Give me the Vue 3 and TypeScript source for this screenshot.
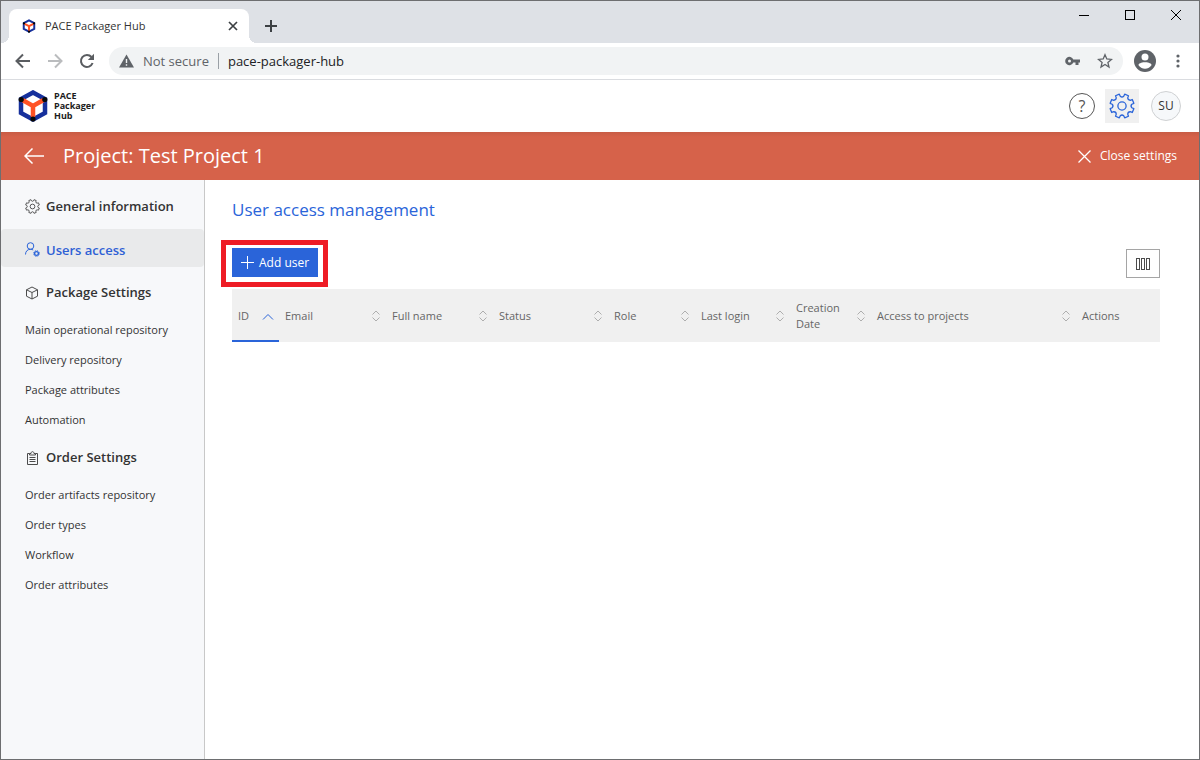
<script setup lang="ts">
import { ref } from 'vue'

interface Column {
  key: string
  label: string
  sort: 'asc' | 'none' | null
}

interface NavGroup {
  title: string
  icon: 'box' | 'clipboard'
  items: string[]
}

const address = ref('pace-packager-hub')

const columns: Column[] = [
  { key: 'id', label: 'ID', sort: 'asc' },
  { key: 'email', label: 'Email', sort: 'none' },
  { key: 'name', label: 'Full name', sort: 'none' },
  { key: 'status', label: 'Status', sort: 'none' },
  { key: 'role', label: 'Role', sort: 'none' },
  { key: 'login', label: 'Last login', sort: 'none' },
  { key: 'created', label: 'Creation Date', sort: 'none' },
  { key: 'projects', label: 'Access to projects', sort: 'none' },
  { key: 'actions', label: 'Actions', sort: null },
]

const groups: NavGroup[] = [
  {
    title: 'Package Settings',
    icon: 'box',
    items: ['Main operational repository', 'Delivery repository', 'Package attributes', 'Automation'],
  },
  {
    title: 'Order Settings',
    icon: 'clipboard',
    items: ['Order artifacts repository', 'Order types', 'Workflow', 'Order attributes'],
  },
]

// Outline of an eight-toothed cog centred on (12, 12), with rounded valleys between the teeth
function cog(outer: number, inner: number, valley: number): string {
  const at = (angle: number, r: number) =>
    `${(12 + r * Math.sin(angle)).toFixed(2)} ${(12 - r * Math.cos(angle)).toFixed(2)}`
  let d = ''
  for (let i = 0; i < 8; i++) {
    const a = ((i + 0.5) * Math.PI) / 4
    d += `${i ? 'L' : 'M'}${at(a - 0.22, inner)}L${at(a - 0.17, outer)}L${at(a + 0.17, outer)}L${at(a + 0.22, inner)}`
    d += `Q${at(a + Math.PI / 8, valley)} ${at(a + Math.PI / 4 - 0.22, inner)}`
  }
  return `${d}Z`
}

const cogPath = cog(11.2, 9.2, 7.6)
</script>

<template>
  <div class="window">
    <header class="tabstrip">
      <div class="tab">
        <svg class="favicon" viewBox="0 0 30 32" aria-hidden="true">
          <path d="M15 3L27 9.500V22.500L15 29L3 22.500V9.500Z" fill="none" stroke="#16309c" stroke-width="4.500" />
          <path d="M5 11L15 16.500L25 11M15 16.500V27" fill="none" stroke="#ff5224" stroke-width="4.500" />
          <circle cx="3.500" cy="10" r="2.500" /><circle cx="26.500" cy="10" r="2.500" /><circle cx="15" cy="29" r="2.500" />
        </svg>
        <span class="tab-title">PACE Packager Hub</span>
        <button class="plain tab-close" aria-label="Close tab">
          <svg width="10" height="10" viewBox="0 0 10 10"><path d="M1 1L9 9M9 1L1 9" stroke="#3c4043" stroke-width="1.700" /></svg>
        </button>
      </div>
      <button class="plain new-tab" aria-label="New tab">
        <svg width="12" height="12" viewBox="0 0 12 12"><path d="M6 0V12M0 6H12" stroke="#3c4043" stroke-width="2" /></svg>
      </button>
      <div class="window-buttons">
        <button class="plain" aria-label="Minimize">
          <svg width="12" height="12" viewBox="0 0 12 12"><path d="M1 6.500H11" stroke="#000" /></svg>
        </button>
        <button class="plain" aria-label="Maximize">
          <svg width="12" height="12" viewBox="0 0 12 12"><rect x="1.500" y="1.500" width="9" height="9" fill="none" stroke="#000" /></svg>
        </button>
        <button class="plain" aria-label="Close window">
          <svg width="12" height="12" viewBox="0 0 12 12"><path d="M1 1L11 11M11 1L1 11" stroke="#000" /></svg>
        </button>
      </div>
    </header>

    <div class="toolbar">
      <button class="plain nav-button" aria-label="Back">
        <svg width="16" height="16" viewBox="0 0 16 16"><path d="M15 8H2M8 1.500L1.500 8L8 14.500" fill="none" stroke="#5a5d61" stroke-width="2" /></svg>
      </button>
      <button class="plain nav-button" aria-label="Forward">
        <svg width="16" height="16" viewBox="0 0 16 16"><path d="M1 8H14M8 1.500L14.500 8L8 14.500" fill="none" stroke="#babcbe" stroke-width="2" /></svg>
      </button>
      <button class="plain nav-button" aria-label="Reload">
        <svg width="16" height="16" viewBox="0 0 16 16">
          <path d="M13.600 10A6 6 0 1 1 12.500 4" fill="none" stroke="#5a5d61" stroke-width="2" />
          <path d="M15 0.800V7H8.800Z" fill="#5a5d61" />
        </svg>
      </button>
      <div class="omnibox">
        <svg class="warn" width="15" height="14" viewBox="0 0 15 14">
          <path d="M7.500 0.500L15 13.500H0Z" fill="#5f6368" /><path d="M7.500 5V9M7.500 10.200V11.800" stroke="#f1f3f4" stroke-width="1.400" />
        </svg>
        <span class="insecure">Not secure</span>
        <input v-model="address" class="address" aria-label="Address" type="text" />
        <button class="plain" aria-label="Saved passwords">
          <svg width="16" height="10" viewBox="0 0 16 10">
            <path fill="#5f6368" fill-rule="evenodd" d="M8.300 3.500H15V6.500H13.500V9H10.500V6.500H8.300A4.200 4.200 0 1 1 8.300 3.500ZM4.500 3.500A1.500 1.500 0 1 0 4.500 6.500A1.500 1.500 0 1 0 4.500 3.500Z" />
          </svg>
        </button>
        <button class="plain star" aria-label="Bookmark">
          <svg width="16" height="16" viewBox="0 0 16 16">
            <path d="M8 1.700L9.800 6L14.500 6.400L10.900 9.400L12 14L8 11.500L4 14L5.100 9.400L1.500 6.400L6.200 6Z" fill="none" stroke="#5f6368" stroke-width="1.300" />
          </svg>
        </button>
      </div>
      <button class="plain profile" aria-label="Profile">
        <svg width="22" height="22" viewBox="0 0 22 22">
          <circle cx="11" cy="11" r="11" fill="#5f6368" /><circle cx="11" cy="7" r="3.500" fill="#fff" />
          <path d="M4.400 15C5 12.800 9 12.300 11 12.300S17 12.800 17.600 15C16.200 17.400 13.800 18.800 11 18.800S5.800 17.400 4.400 15Z" fill="#fff" />
        </svg>
      </button>
      <button class="plain menu" aria-label="Menu">
        <svg width="4" height="14" viewBox="0 0 4 14" fill="#5f6368"><circle cx="2" cy="2" r="1.600" /><circle cx="2" cy="7" r="1.600" /><circle cx="2" cy="12" r="1.600" /></svg>
      </button>
    </div>

    <header class="app-header">
      <a class="brand" href="#">
        <svg width="30" height="32" viewBox="0 0 30 32" aria-hidden="true">
          <path d="M15 2.500L27 9V23L15 29.500L3 23V9Z" fill="none" stroke="#16309c" stroke-width="4.500" />
          <path d="M4.500 10L15 16L25.500 10M15 16V27" fill="none" stroke="#ff5224" stroke-width="4.500" />
          <g fill="#080808"><circle cx="3.200" cy="9.500" r="2.600" /><circle cx="26.800" cy="9.500" r="2.600" /><circle cx="15" cy="29" r="2.600" /></g>
        </svg>
        <span class="brand-name">PACE<br />Packager<br />Hub</span>
      </a>
      <div class="header-actions">
        <button class="plain help" aria-label="Help">?</button>
        <button class="plain gear" aria-label="Settings">
          <svg width="26" height="26" viewBox="0 0 24 24" fill="none" stroke="#2a64d9" stroke-width="1.200" stroke-linejoin="round">
            <path :d="cogPath" /><circle cx="12" cy="12" r="3.800" />
          </svg>
        </button>
        <button class="plain avatar">SU</button>
      </div>
    </header>

    <div class="project-bar">
      <button class="plain back" aria-label="Back to projects">
        <svg width="20" height="16" viewBox="0 0 20 16"><path d="M20 8H1M8.500 0.500L1 8L8.500 15.500" fill="none" stroke="#fff" stroke-width="1.500" /></svg>
      </button>
      <h1>Project: Test Project 1</h1>
      <button class="plain close-settings">
        <svg width="13" height="13" viewBox="0 0 13 13"><path d="M0.500 0.500L12.500 12.500M12.500 0.500L0.500 12.500" stroke="#fff" stroke-width="1.300" /></svg>
        Close settings
      </button>
    </div>

    <div class="body">
      <nav class="sidebar" aria-label="Settings">
        <a class="section" href="#">
          <svg width="15" height="15" viewBox="0 0 24 24" fill="none" stroke="#4c4c4c" stroke-width="1.500" stroke-linejoin="round">
            <path :d="cogPath" /><circle cx="12" cy="12" r="3.800" />
          </svg>
          General information
        </a>
        <a class="section active" href="#" aria-current="page">
          <svg width="15" height="15" viewBox="0 0 15 15" fill="none" stroke="#2a64d9">
            <circle cx="5.500" cy="4" r="3.300" /><path d="M0.500 12.500C0.500 9.300 2.500 7.300 5.500 7.300C6.500 7.300 7.500 7.500 8.200 8" />
            <circle cx="11.500" cy="11.500" r="1.900" stroke-width="1.400" />
            <circle cx="11.500" cy="11.500" r="2.900" stroke-dasharray="1.100 1.180" />
          </svg>
          Users access
        </a>
        <div v-for="group in groups" :key="group.title" class="group">
          <h2 class="section">
            <svg v-if="group.icon === 'box'" width="15" height="15" viewBox="0 0 15 15" fill="none" stroke="#4c4c4c" stroke-linejoin="round">
              <path d="M7 2L12.500 4.800V11.200L7 14L1.500 11.200V4.800ZM1.500 4.800L7 7.500L12.500 4.800M7 7.500V14" />
            </svg>
            <svg v-else width="15" height="15" viewBox="0 0 15 15" fill="none" stroke="#4c4c4c">
              <path d="M4.500 3.500H2.500V14.500H12.500V3.500H10.500M4.500 5V3.500H6C6 1 9 1 9 3.500H10.500V5ZM4.500 7.500H10.500M4.500 9.500H10.500M4.500 11.500H10.500" />
            </svg>
            {{ group.title }}
          </h2>
          <ul>
            <li v-for="item in group.items" :key="item"><a href="#">{{ item }}</a></li>
          </ul>
        </div>
      </nav>

      <main class="content">
        <h2 class="title">User access management</h2>
        <div class="actions">
          <div class="highlight">
            <button class="plain add-user">
              <svg width="13" height="13" viewBox="0 0 13 13"><path d="M6.500 0V13M0 6.500H13" stroke="#fff" /></svg>
              Add user
            </button>
          </div>
          <button class="plain columns-button" aria-label="Choose columns">
            <svg width="14" height="12" viewBox="0 0 14 12" fill="none" stroke="#4c4c4c">
              <rect x="0.500" y="0.500" width="3" height="11" /><rect x="5.500" y="0.500" width="3" height="11" /><rect x="10.500" y="0.500" width="3" height="11" />
            </svg>
          </button>
        </div>
        <table>
          <thead>
            <tr>
              <th v-for="col in columns" :key="col.key" scope="col" :class="[`col-${col.key}`, { sorted: col.sort === 'asc' }]">
                <div class="cell">
                  <span>{{ col.label }}</span>
                  <svg v-if="col.sort === 'asc'" width="12" height="12" viewBox="0 0 12 12" fill="none" stroke="#2a64d9">
                    <path d="M1 9.500L6 4.500L11 9.500" />
                  </svg>
                  <svg v-else-if="col.sort" width="10" height="12" viewBox="0 0 10 12" fill="none" stroke="#aeaeae">
                    <path d="M1.500 4.500L5 1L8.500 4.500M1.500 7.500L5 11L8.500 7.500" />
                  </svg>
                </div>
              </th>
            </tr>
          </thead>
        </table>
      </main>
    </div>
  </div>
</template>

<style>
body {
  margin: 0;
}
</style>

<style scoped>
.window,
.window * {
  box-sizing: border-box;
}
.window {
  min-height: 100vh;
  display: flex;
  flex-direction: column;
  border: 1px solid #6d6e70;
  background: #fff;
  color: #333;
  font-family: "Open Sans", "Noto Sans", sans-serif;
  font-size: 12px;
  line-height: 16px;
}
svg {
  display: block;
  flex: none;
}
h1,
h2,
ul {
  margin: 0;
  padding: 0;
  font-weight: 400;
  list-style: none;
}
a {
  color: inherit;
  text-decoration: none;
}
.plain {
  display: flex;
  align-items: center;
  justify-content: center;
  border: 0;
  padding: 0;
  background: none;
  color: inherit;
  font: inherit;
  white-space: nowrap;
}

.tabstrip {
  display: flex;
  height: 42px;
  padding: 8px 8px 0;
  background: #dee1e6;
}
.tab {
  position: relative;
  display: flex;
  align-items: center;
  width: 240px;
  padding: 0 9px 0 13px;
  border-radius: 8px 8px 0 0;
  background: #fff;
}
.tab::before,
.tab::after {
  content: "";
  position: absolute;
  bottom: 0;
  width: 8px;
  height: 8px;
}
.tab::before {
  right: 100%;
  background: radial-gradient(circle at 0 0, transparent 8px, #fff 8px);
}
.tab::after {
  left: 100%;
  background: radial-gradient(circle at 100% 0, transparent 8px, #fff 8px);
}
.favicon {
  width: 14px;
  height: 14px;
  margin-right: 9px;
}
.tab-title {
  flex: 1;
  font-size: 11px;
}
.tab-close {
  width: 14px;
}
.new-tab {
  width: 28px;
  margin-left: 8px;
}
.window-buttons {
  display: flex;
  gap: 34px;
  height: 12px;
  margin-left: auto;
  padding-right: 9px;
}

.toolbar {
  display: flex;
  align-items: center;
  height: 37px;
  padding: 0 19px 0 14px;
  border-bottom: 1px solid #dadce0;
}
.nav-button {
  margin-right: 16px;
}
.omnibox {
  flex: 1;
  display: flex;
  align-items: center;
  height: 28px;
  margin-left: -2px;
  padding: 0 10px;
  border-radius: 14px;
  background: #f1f3f4;
  font-size: 13px;
}
.insecure {
  margin-left: 9px;
  padding-right: 9px;
  border-right: 1px solid #9aa0a6;
  color: #5f6368;
}
.address {
  flex: 1;
  min-width: 0;
  border: 0;
  padding: 0 0 0 9px;
  background: none;
  color: #202124;
  font: inherit;
  outline: 0;
}
.star {
  margin-left: 16px;
}
.profile {
  margin-left: 11px;
}
.menu {
  margin-left: 20px;
}

.app-header {
  display: flex;
  align-items: center;
  justify-content: space-between;
  height: 52px;
  padding: 0 18px 0 17px;
}
.brand {
  display: flex;
  align-items: center;
  gap: 6px;
  color: #1c1c1c;
  font-size: 9px;
  font-weight: 700;
  line-height: 10px;
}
.header-actions {
  display: flex;
  align-items: center;
  gap: 10px;
}
.help {
  width: 26px;
  height: 26px;
  border: 1px solid #555;
  border-radius: 50%;
  color: #555;
  font-size: 16px;
}
.gear {
  width: 34px;
  height: 34px;
  background: #f0f0f0;
}
.avatar {
  width: 30px;
  height: 30px;
  margin-left: 2px;
  border: 1px solid #cfd1d3;
  border-radius: 50%;
  background: #f6f8fa;
}

.project-bar {
  display: flex;
  align-items: center;
  height: 48px;
  padding: 0 22px 0 23px;
  background: linear-gradient(#c85c45, #d6624a 5px);
  color: #fff;
}
h1 {
  margin-left: 19px;
  font-size: 20px;
  line-height: 28px;
}
.close-settings {
  gap: 9px;
  margin-left: auto;
}

.body {
  flex: 1;
  display: flex;
}
.sidebar {
  width: 204px;
  padding-top: 7px;
  border-right: 1px solid #c8c8c8;
  background: #f7f8fa;
}
.section {
  display: flex;
  align-items: center;
  gap: 6px;
  height: 38px;
  padding-left: 24px;
  border-radius: 4px;
  font-size: 13px;
  font-weight: 600;
}
.active {
  margin: 4px 0 6px;
  padding-top: 3px;
  background: #e9eaeb;
  color: #2f61d5;
}
.group ul {
  margin: 4px 0 3px;
  font-size: 11px;
}
.group li a {
  display: block;
  padding: 7px 0 7px 24px;
}

.content {
  flex: 1;
  min-width: 0;
  padding: 18px 39px 0 27px;
}
.title {
  color: #2a64d9;
  font-size: 17px;
  line-height: 24px;
}
.actions {
  display: flex;
  align-items: center;
  justify-content: space-between;
  margin: 18px 0 2px;
}
.highlight {
  margin-left: -11px;
  padding: 3px 5px 5px 6px;
  border: 5px solid #ee1c25;
}
.add-user {
  gap: 5px;
  height: 29px;
  padding: 0 9px;
  background: #2a64d9;
  color: #fff;
}
.columns-button {
  width: 34px;
  height: 29px;
  border: 1px solid #a5a5a5;
}

table {
  width: 100%;
  table-layout: fixed;
  border-collapse: collapse;
}
th {
  height: 53px;
  padding: 0 5px 0 6px;
  background: #f0f0f0;
  color: #666;
  font-size: 11px;
  font-weight: 400;
  text-align: left;
}
.sorted {
  box-shadow: inset 0 -2px #2a64d9;
}
.cell {
  display: flex;
  align-items: center;
  justify-content: space-between;
}
.col-id {
  width: 47px;
}
.col-email,
.col-name {
  width: 107px;
}
.col-status {
  width: 115px;
}
.col-role {
  width: 87px;
}
.col-login {
  width: 95px;
}
.col-created {
  width: 81px;
}
.col-actions {
  width: 84px;
}
</style>
